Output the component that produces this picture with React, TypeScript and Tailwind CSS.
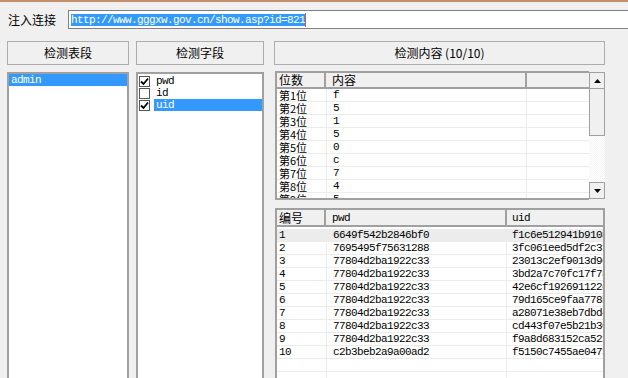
import React from "react";

const cjk = { fontFamily: '"Noto Sans CJK SC", "Liberation Sans", sans-serif' };
const mono = { fontFamily: '"Liberation Mono", "Noto Sans CJK SC", monospace' };

const digits = ["f", "5", "1", "5", "0", "c", "7", "4", "5"];

const rows = [
  ["1", "6649f542b2846bf0", "f1c6e512941b9108"],
  ["2", "7695495f75631288", "3fc061eed5df2c3f"],
  ["3", "77804d2ba1922c33", "23013c2ef9013d96"],
  ["4", "77804d2ba1922c33", "3bd2a7c70fc17f78"],
  ["5", "77804d2ba1922c33", "42e6cf192691122e"],
  ["6", "77804d2ba1922c33", "79d165ce9faa778b"],
  ["7", "77804d2ba1922c33", "a28071e38eb7dbd4"],
  ["8", "77804d2ba1922c33", "cd443f07e5b21b30"],
  ["9", "77804d2ba1922c33", "f9a8d683152ca521"],
  ["10", "c2b3beb2a9a00ad2", "f5150c7455ae0473"],
  ["", "", ""],
  ["", "", ""],
];

function WinButton({ children }: { children: React.ReactNode }) {
  return (
    <div
      className="flex h-[24px] shrink-0 items-center justify-center border border-[#adadad] bg-[#f0f0f0] text-[12px] text-black"
      style={cjk}
    >
      {children}
    </div>
  );
}

function Check({ checked }: { checked: boolean }) {
  return (
    <div className="flex h-[11px] w-[11px] shrink-0 items-center justify-center border border-[#555] bg-white">
      {checked && (
        <svg width="9" height="9" viewBox="0 0 9 9">
          <path d="M1 4.5 L3.5 7 L8 1.5" stroke="#000" strokeWidth="1.8" fill="none" />
        </svg>
      )}
    </div>
  );
}

export default function App() {
  return (
    <div className="flex h-[378px] w-[628px] flex-col overflow-hidden border-t-2 border-[#c4906c] bg-[#f0f0f0]">
      <div className="flex h-[34px] shrink-0 items-start pt-[8px]">
        <span className="ml-[8px] mt-[1px] w-[60px] text-[12px] leading-[18px] text-black" style={cjk}>
          注入连接
        </span>
        <div className="flex h-[19px] flex-1 items-center border border-[#808080] border-r-0 bg-white pl-[2px]">
          <span
            className="bg-[#3399ff] text-[11px] leading-[12px] tracking-[-0.6px] text-white"
            style={mono}
          >
            http://www.gggxw.gov.cn/show.asp?id=821
          </span>
          <span className="h-[14px] w-[1px] bg-[#c06030]" />
        </div>
      </div>

      <div className="mt-[5px] flex min-h-0 flex-1 pl-[7px]">
        {/* tables column */}
        <div className="flex w-[122px] shrink-0 flex-col">
          <WinButton>检测表段</WinButton>
          <div className="mt-[7px] flex-1 border-2 border-b-0 border-[#a0a0a0] bg-white">
            <div
              className="h-[12px] bg-[#3399ff] pl-[2px] text-[11px] leading-[12px] tracking-[-0.6px] text-white"
              style={mono}
            >
              admin
            </div>
          </div>
        </div>

        {/* fields column */}
        <div className="ml-[7px] flex w-[128px] shrink-0 flex-col">
          <WinButton>检测字段</WinButton>
          <div className="mt-[7px] flex-1 border-2 border-b-0 border-[#a0a0a0] bg-white pt-[1px]">
            {[
              ["pwd", true, false],
              ["id", false, false],
              ["uid", true, true],
            ].map(([name, checked, sel]) => (
              <div key={name as string} className="flex h-[12px] items-center">
                <div className="ml-[1px] w-[15px]">
                  <Check checked={checked as boolean} />
                </div>
                <div
                  className={`h-[12px] flex-1 pl-[2px] text-[11px] leading-[12px] tracking-[-0.6px] ${
                    sel ? "bg-[#3399ff] text-white" : "text-black"
                  }`}
                  style={mono}
                >
                  {name as string}
                </div>
              </div>
            ))}
          </div>
        </div>

        {/* content column */}
        <div className="ml-[10px] flex w-[331px] shrink-0 flex-col">
          <WinButton>检测内容 (10/10)</WinButton>
          <div className="mt-[6px] flex h-[129px] shrink-0 pl-[1px]">
            <div className="flex w-[314px] flex-col overflow-hidden border-2 border-r-0 border-[#a0a0a0] bg-white">
              <div className="flex h-[16px] shrink-0 border-b-2 border-[#a0a0a0] bg-[#f0f0f0] text-[12px] leading-[14px]" style={cjk}>
                <div className="w-[49px] border-r-2 border-[#a0a0a0] pl-[2px]">位数</div>
                <div className="w-[201px] border-r-2 border-[#a0a0a0] pl-[6px]">内容</div>
                <div className="flex-1" />
              </div>
              {digits.map((d, i) => (
                <div key={i} className="flex h-[13px] shrink-0 border-b border-[#ececec] leading-[12px]">
                  <div className="w-[50px] border-r border-[#ececec] pl-[2px] text-[11px]" style={cjk}>
                    第{i + 1}位
                  </div>
                  <div className="w-[200px] border-r border-[#ececec] pl-[6px] text-[11px] tracking-[-0.6px]" style={mono}>
                    {d}
                  </div>
                  <div className="flex-1" />
                </div>
              ))}
            </div>
            <div className="mt-[1px] flex h-[127px] w-[16px] flex-col">
              <div className="flex h-[17px] shrink-0 items-center justify-center border border-[#a0a0a0] bg-[#f0f0f0]">
                <svg width="7" height="4" viewBox="0 0 7 4">
                  <path d="M3.5 0 L7 4 L0 4 Z" fill="#000" />
                </svg>
              </div>
              <div className="h-[47px] shrink-0 border border-t-0 border-[#a0a0a0] bg-[#f0f0f0]" />
              <div className="flex-1 bg-[repeating-conic-gradient(#f4f4f4_0%_25%,#ffffff_0%_50%)] bg-[length:2px_2px]" />
              <div className="flex h-[17px] shrink-0 items-center justify-center border border-[#a0a0a0] bg-[#f0f0f0]">
                <svg width="7" height="4" viewBox="0 0 7 4">
                  <path d="M0 0 L7 0 L3.5 4 Z" fill="#000" />
                </svg>
              </div>
            </div>
          </div>

          <div className="ml-[1px] mt-[8px] flex min-h-0 flex-1 flex-col overflow-hidden border-2 border-b-0 border-[#a0a0a0] bg-white">
            <div className="flex h-[17px] shrink-0 border-b-2 border-[#a0a0a0] bg-[#f0f0f0] text-[12px] leading-[15px]">
              <div className="w-[49px] border-r-2 border-[#a0a0a0] pl-[2px]" style={cjk}>编号</div>
              <div
                className="w-[181px] border-r-2 border-[#a0a0a0] pl-[6px] pt-[1px] text-[11px] tracking-[-0.6px]"
                style={mono}
              >
                pwd
              </div>
              <div className="flex-1 pl-[5px] pt-[1px] text-[11px] tracking-[-0.6px]" style={mono}>
                uid
              </div>
            </div>
            <div className="h-[2px] shrink-0" />
            {rows.map((r, i) => (
              <div
                key={i}
                className={`flex h-[13px] shrink-0 border-b border-[#ececec] text-[11px] leading-[12px] tracking-[-0.6px] ${
                  i === 0 ? "bg-[#ececec]" : ""
                }`}
                style={mono}
              >
                <div className="w-[50px] border-r border-[#ececec] pl-[2px]">{r[0]}</div>
                <div className="w-[180px] border-r border-[#ececec] pl-[6px]">{r[1]}</div>
                <div className="flex-1 overflow-hidden whitespace-nowrap pl-[5px]">{r[2]}</div>
              </div>
            ))}
          </div>
        </div>
      </div>
    </div>
  );
}
